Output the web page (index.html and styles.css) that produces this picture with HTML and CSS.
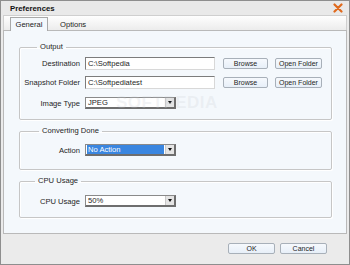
FILE: index.html
```html
<!DOCTYPE html>
<html>
<head>
<meta charset="utf-8">
<link rel="stylesheet" href="styles.css">
</head>
<body>
<div class="window">
  <div class="titlebar">
    <span class="title">Preferences</span>
    <svg class="close" viewBox="0 0 10 10" width="10" height="10"><path d="M1.5 1.5 L8.5 8.5 M8.5 1.5 L1.5 8.5" stroke="#e06a1e" stroke-width="2.2" stroke-linecap="round"/></svg>
  </div>
  <div class="tabs">
    <div class="tab active">General</div>
    <div class="tab">Options</div>
  </div>
  <div class="panel">
    <fieldset class="group g-output">
      <legend>Output</legend>
      <div class="row">
        <span class="label">Destination</span>
        <div class="input">C:\Softpedia</div>
        <button class="btn browse">Browse</button>
        <button class="btn open">Open Folder</button>
      </div>
      <div class="row">
        <span class="label">Snapshot Folder</span>
        <div class="input">C:\Softpediatest</div>
        <button class="btn browse">Browse</button>
        <button class="btn open">Open Folder</button>
      </div>
      <div class="row row-select">
        <span class="label">Image Type</span>
        <div class="select"><span class="value">JPEG</span><span class="arrow"></span></div>
      </div>
      <span class="watermark">SOFTPEDIA</span>
    </fieldset>
    <fieldset class="group g-convert">
      <legend>Converting Done</legend>
      <div class="row">
        <span class="label">Action</span>
        <div class="select"><span class="value selected">No Action</span><span class="arrow"></span></div>
      </div>
    </fieldset>
    <fieldset class="group g-cpu">
      <legend>CPU Usage</legend>
      <div class="row">
        <span class="label">CPU Usage</span>
        <div class="select"><span class="value">50%</span><span class="arrow"></span></div>
      </div>
    </fieldset>
  </div>
  <div class="footer">
    <button class="btn dlg">OK</button>
    <button class="btn dlg">Cancel</button>
  </div>
</div>
</body>
</html>
```
FILE: styles.css
```css
* { box-sizing: border-box; margin: 0; padding: 0; }
body {
  margin: 0;
  width: 350px;
  height: 265px;
  overflow: hidden;
  background: #ffffff;
  font-family: "Liberation Sans", Arial, sans-serif;
  font-size: 7.6px;
  color: #1e1e1e;
}
.window {
  width: 350px;
  height: 265px;
  border: 1px solid #8e8e8e;
  background: #ebebeb;
  display: flex;
  flex-direction: column;
}
.titlebar {
  height: 14px;
  flex: 0 0 14px;
  display: flex;
  align-items: center;
  justify-content: space-between;
  padding: 0 6px 0 9px;
  background: #e9e9e9;
}
.title {
  font-weight: bold;
  font-size: 7.8px;
  color: #111;
}
.close { display: block; }
.tabs {
  height: 15px;
  flex: 0 0 15px;
  margin: 0 2px;
  display: flex;
  align-items: flex-end;
  padding-left: 6px;
  background: linear-gradient(#fefefe, #ececec);
  border: 1px solid #cfcfcf;
  border-bottom: none;
}
.tab {
  height: 14px;
  display: flex;
  align-items: center;
  justify-content: center;
  color: #222;
}
.tab.active {
  width: 38px;
  background: #f4f8fc;
  border: 1px solid #a9a9a9;
  border-bottom: none;
  position: relative;
  z-index: 1;
  margin-bottom: -1px;
}
.tab:not(.active) {
  padding: 0 12px;
  margin-bottom: -1px;
}
.panel {
  height: 204px;
  flex: 0 0 204px;
  margin: 0 2px;
  border: 1px solid #b9b9b9;
  background: #f4f8fc;
  padding: 12px 14px 0 15px;
  display: flex;
  flex-direction: column;
  gap: 7px;
}
.group {
  border: 1px solid #c6c6c6;
  box-shadow: inset 1px 1px 0 #ffffff, 1px 1px 0 #ffffff;
  border-radius: 2px;
  padding: 6px 0 10px 0;
  display: flex;
  flex-direction: column;
  gap: 6px;
  position: relative;
}
.group legend {
  font-size: 7.6px;
  line-height: 8px;
  padding: 0 3px;
  margin-left: 17px;
  color: #1e1e1e;
}
.g-convert legend { margin-left: 19px; }
.g-cpu legend { margin-left: 15px; }
.g-convert { padding: 9px 0 13px 0; }
.g-cpu { padding: 10px 0 10px 0; }
.row {
  display: flex;
  align-items: center;
}
.row-select { margin-top: 2px; }
.label {
  width: 60px;
  margin-right: 5px;
  text-align: right;
  white-space: nowrap;
}
.input {
  width: 130px;
  height: 13px;
  background: #ffffff;
  border: 1px solid;
  border-color: #7c7c7c #d8d8d8 #d8d8d8 #7c7c7c;
  padding-left: 2px;
  line-height: 11px;
  white-space: nowrap;
}
.btn {
  font-family: "Liberation Sans", Arial, sans-serif;
  font-size: 7px;
  height: 11px;
  line-height: 9px;
  background: linear-gradient(#f6f9fd, #e7eff8);
  border: 1px solid #a8b0b9;
  border-radius: 2px;
  color: #1e1e1e;
  text-align: center;
}
.browse { width: 45px; margin-left: 8px; }
.open { width: 47px; margin-left: 7px; }
.select {
  width: 91px;
  height: 12px;
  background: #ffffff;
  border: 1px solid;
  border-color: #8a8a8a #6e6e6e #6e6e6e #8a8a8a;
  border-right-width: 2px;
  border-bottom-width: 2px;
  display: flex;
  align-items: stretch;
}
.value {
  flex: 1;
  padding-left: 2px;
  line-height: 9px;
  white-space: nowrap;
  margin: 0 1px 0 0;
}
.value.selected {
  background: #3a86e0;
  color: #ffffff;
  margin: 0 1px 0 1px;
  padding-left: 1px;
}
.arrow {
  width: 9px;
  background: #e4e4e4;
  border-left: 1px solid #c8c8c8;
  display: flex;
  align-items: center;
  justify-content: center;
}
.arrow::after {
  content: "";
  border-left: 2.5px solid transparent;
  border-right: 2.5px solid transparent;
  border-top: 3px solid #111;
}
.watermark {
  position: absolute;
  left: 96px;
  top: 42px;
  font-size: 17px;
  font-weight: bold;
  letter-spacing: 0.5px;
  color: rgba(200, 204, 210, 0.22);
  pointer-events: none;
}
.footer {
  flex: 1;
  display: flex;
  justify-content: flex-end;
  align-items: flex-start;
  gap: 5px;
  padding: 9px 22px 0 0;
  background: #ebebeb;
}
.dlg { width: 47px; }
```
